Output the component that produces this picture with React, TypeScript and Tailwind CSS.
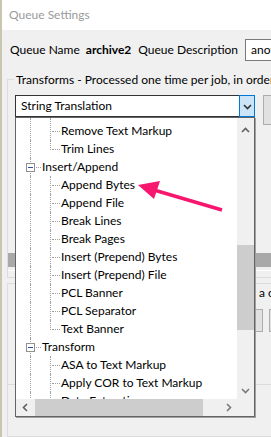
import React from 'react';

type TreeRow = { label: string; level: 1 | 2; last?: boolean };

const rows: TreeRow[] = [
  { label: 'Remove Text Markup', level: 2 },
  { label: 'Trim Lines', level: 2, last: true },
  { label: 'Insert/Append', level: 1 },
  { label: 'Append Bytes', level: 2 },
  { label: 'Append File', level: 2 },
  { label: 'Break Lines', level: 2 },
  { label: 'Break Pages', level: 2 },
  { label: 'Insert (Prepend) Bytes', level: 2 },
  { label: 'Insert (Prepend) File', level: 2 },
  { label: 'PCL Banner', level: 2 },
  { label: 'PCL Separator', level: 2 },
  { label: 'Text Banner', level: 2, last: true },
  { label: 'Transform', level: 1 },
  { label: 'ASA to Text Markup', level: 2 },
  { label: 'Apply COR to Text Markup', level: 2 },
  { label: 'Data Extraction', level: 2 },
];

function Chevron({ dir, color = '#606060' }: { dir: 'up' | 'down' | 'left' | 'right'; color?: string }) {
  const d = {
    up: 'M1 6 L4.5 2.5 L8 6',
    down: 'M1 3 L4.5 6.5 L8 3',
    left: 'M6 1 L2.5 4.5 L6 8',
    right: 'M3 1 L6.5 4.5 L3 8',
  }[dir];
  return (
    <svg width="9" height="9" viewBox="0 0 9 9">
      <path d={d} fill="none" stroke={color} strokeWidth="1.6" />
    </svg>
  );
}

function Row({ row, first }: { row: TreeRow; first: boolean }) {
  return (
    <div className="relative h-[18px] whitespace-nowrap">
      <span
        className={`absolute left-[14px] bottom-0 border-l border-dotted border-[#a0a0a0] ${first ? '-top-[4px]' : 'top-0'}`}
      />
      {row.level === 2 ? (
        <>
          <span
            className={`absolute left-[34px] border-l border-dotted border-[#a0a0a0] ${first ? '-top-[4px]' : 'top-0'} ${row.last ? 'h-[10px]' : 'bottom-0'}`}
          />
          <span className="absolute left-[36px] top-[9px] w-[8px] border-t border-dotted border-[#a0a0a0]" />
          <span className="absolute left-[45px] top-0 flex h-full items-center">{row.label}</span>
        </>
      ) : (
        <>
          <span className="absolute left-[10px] top-[5px] flex h-[9px] w-[9px] items-center justify-center border border-[#919191] bg-white">
            <span className="h-px w-[5px] bg-[#2d4f9e]" />
          </span>
          <span className="absolute left-[20px] top-[9px] w-[5px] border-t border-dotted border-[#a0a0a0]" />
          <span className="absolute left-[26px] top-0 flex h-full items-center">{row.label}</span>
        </>
      )}
    </div>
  );
}

function DropList() {
  return (
    <div className="absolute left-[15px] top-[117px] h-[300px] w-[240px] border border-[#646464] bg-white shadow-[1px_1px_0_#a0a0a0]">
      <div className="grid h-full grid-cols-[1fr_17px] grid-rows-[1fr_17px]">
        <div className="overflow-hidden pt-[4px]">
          {rows.map((r, i) => (
            <Row key={r.label} row={r} first={i === 0} />
          ))}
        </div>
        <div className="flex flex-col bg-[#f0f0f0]">
          <div className="flex h-[24px] items-center justify-center pt-[1px]">
            <Chevron dir="up" />
          </div>
          <div className="h-[103px]" />
          <div className="h-[85px] bg-[#cdcdcd]" />
          <div className="flex-1" />
          <div className="flex h-[17px] items-center justify-center">
            <Chevron dir="down" color="#7a7a7a" />
          </div>
        </div>
        <div className="flex bg-[#f0f0f0]">
          <div className="flex w-[17px] items-center justify-center pl-[2px]">
            <Chevron dir="left" />
          </div>
          <div className="my-0 ml-[2px] w-[168px] bg-[#cdcdcd]" />
          <div className="flex-1" />
          <div className="flex w-[17px] items-center justify-center">
            <Chevron dir="right" color="#7a7a7a" />
          </div>
        </div>
        <div className="bg-[#f0f0f0]" />
      </div>
    </div>
  );
}

export default function App() {
  return (
    <div className="relative h-[437px] w-[271px] overflow-hidden bg-[#f0f0f0] font-['Lato',sans-serif] text-[12px] leading-none text-black">
      <div className="flex h-full">
        <div className="w-[2px] shrink-0 bg-[#c8c5b0]" />
        <div className="flex w-[520px] shrink-0 flex-col">
          <div className="flex h-[30px] shrink-0 items-center bg-white pl-[7px] text-[#9a9a9a]">Queue Settings</div>

          <div className="mt-[9px] flex h-[22px] shrink-0 items-center whitespace-nowrap pl-[8px]">
            <span>Queue Name</span>
            <span className="ml-[6px] font-bold">archive2</span>
            <span className="ml-[7px]">Queue Description</span>
            <div className="ml-[7px] flex h-[22px] w-[200px] shrink-0 items-center border border-[#7a7a7a] bg-white pl-[5px]">
              another archive queue
            </div>
          </div>

          <div className="relative ml-[5px] mt-[18px] h-[199px] shrink-0 border border-[#dcdcdc] pl-[7px] pt-[15px]">
            <span className="absolute left-[6px] top-0 -translate-y-1/2 whitespace-nowrap bg-[#f0f0f0] px-[2px]">
              Transforms - Processed one time per job, in order listed
            </span>
            <div className="flex items-start gap-[8px]">
              <div className="flex h-[22px] w-[240px]">
                <div className="flex flex-1 items-center border-y border-l border-[#333] bg-white pl-[5px]">
                  String Translation
                </div>
                <div className="flex w-[16px] items-center justify-center border border-[#0078d7] bg-[#cce4f7]">
                  <Chevron dir="down" color="#333" />
                </div>
              </div>
              <div className="h-[30px] w-[60px] border border-[#adadad] bg-[#e1e1e1]" />
            </div>
            <div className="ml-[-7px] mt-[128px] h-[14px] bg-[#a9a9a9]" />
            <div className="ml-[-7px] mt-[3px] h-px bg-white" />
          </div>

          <div className="ml-[5px] mt-[5px] flex-1 border border-[#dcdcdc]">
            <div className="flex h-[18px] items-center whitespace-nowrap pl-[251px]">a column</div>
            <div className="mt-[7px] flex h-[23px]">
              <div className="ml-[192px] w-[63px] border border-[#adadad] bg-[#e1e1e1]" />
              <div className="ml-[6px] w-[60px] border border-[#adadad] bg-[#e1e1e1]" />
            </div>
            <div className="mt-[52px] h-px bg-[#dcdcdc]" />
          </div>
        </div>
      </div>

      <DropList />

      <svg className="pointer-events-none absolute left-0 top-0" width="271" height="437">
        <line x1="222" y1="210" x2="154" y2="190" stroke="#f7176f" strokeWidth="3.5" />
        <polygon points="138,185 160,181 154,199" fill="#f7176f" />
      </svg>
    </div>
  );
}
